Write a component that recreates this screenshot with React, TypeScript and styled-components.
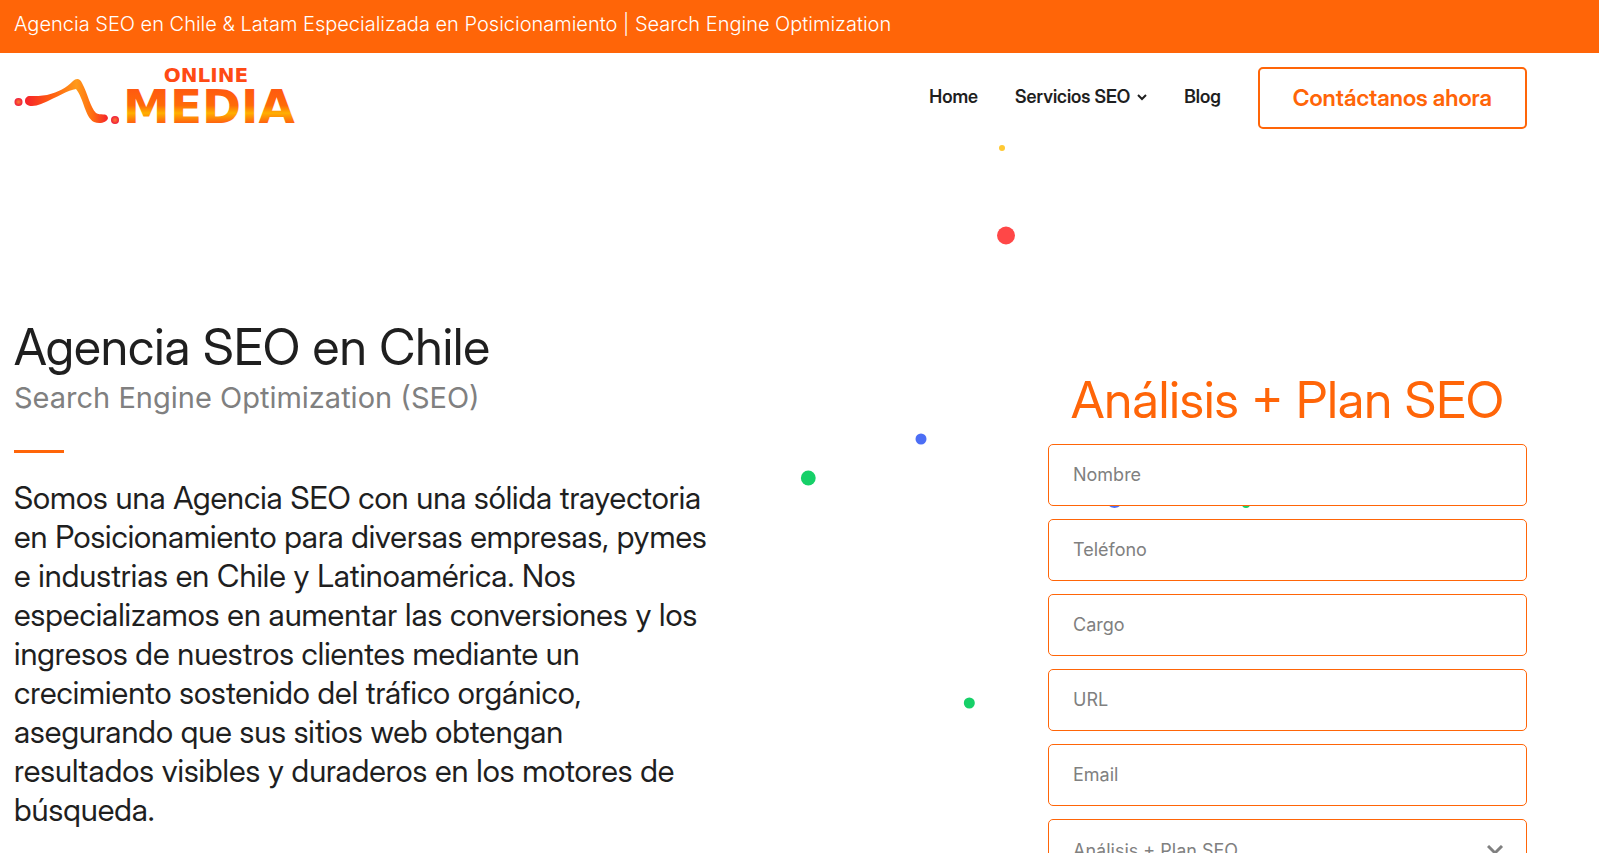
import React from "react";
import styled, { createGlobalStyle } from "styled-components";

const orange = "#ff6508";
const ink = "#1f1f1f";
const display = `"Inter Display", Inter, "Liberation Sans", sans-serif`;

const GlobalStyle = createGlobalStyle`
  *, *::before, *::after { box-sizing: border-box; }
  body {
    margin: 0;
    background: #fff;
    color: ${ink};
    font-family: Inter, "Liberation Sans", sans-serif;
  }
`;

const Page = styled.div`
  position: relative;
  overflow-x: clip;
`;

const TopBar = styled.div`
  background: ${orange};
  color: #fff;
  padding: 9px 14px 14px;
  font-size: 20px;
  font-weight: 300;
  line-height: 30px;
`;

const Header = styled.header`
  display: flex;
  justify-content: space-between;
  align-items: flex-start;
  padding: 14px 72px 0 14px;
`;

const LogoLink = styled.a`
  display: block;
  line-height: 0;
`;

const Nav = styled.nav`
  display: flex;
  align-items: center;
  gap: 37px;
`;

const NavLink = styled.a`
  display: flex;
  align-items: center;
  gap: 7px;
  padding-bottom: 2px;
  color: ${ink};
  font-family: ${display};
  font-size: 18px;
  font-weight: 600;
  line-height: 24px;
  text-decoration: none;
`;

const ContactButton = styled.button`
  height: 62px;
  padding: 0 33px;
  border: 2px solid ${orange};
  border-radius: 5px;
  background: #fff;
  color: ${orange};
  font: 600 23px/30px ${display};
  cursor: pointer;
`;

const Particles = styled.svg`
  position: absolute;
  top: 0;
  left: 0;
  overflow: visible;
  pointer-events: none;
`;

const Hero = styled.main`
  position: relative;
  display: flex;
  justify-content: space-between;
  align-items: flex-start;
  padding: 188px 72px 24px 14px;
`;

const Intro = styled.section`
  width: 48%;
  max-width: 694px;
`;

const Title = styled.h1`
  margin: 0;
  font-family: ${display};
  font-size: 50px;
  font-weight: 400;
  line-height: 60px;
`;

const Subtitle = styled.h2`
  margin: 0;
  color: #808080;
  font-size: 29px;
  font-weight: 400;
  line-height: 42px;
`;

const Rule = styled.hr`
  width: 50px;
  height: 3px;
  margin: 31px 0 25px;
  border: 0;
  background: ${orange};
`;

const Lead = styled.p`
  margin: 0;
  font-family: ${display};
  font-size: 31px;
  line-height: 39px;
`;

const Form = styled.form`
  display: flex;
  flex-direction: column;
  gap: 13px;
  width: 479px;
  padding-top: 52px;
`;

const FormTitle = styled.h2`
  margin: 0;
  color: ${orange};
  font-family: ${display};
  font-size: 51px;
  font-weight: 400;
  line-height: 62px;
  text-align: center;
  white-space: nowrap;
`;

const Field = styled.input`
  width: 100%;
  height: 62px;
  padding: 0 24px 2px;
  border: 1px solid ${orange};
  border-radius: 5px;
  background: #fff;
  color: ${ink};
  font: 400 18px/24px Inter, "Liberation Sans", sans-serif;
  &::placeholder { color: #808080; opacity: 1; }
`;

const SelectBox = styled.div`
  position: relative;
  svg {
    position: absolute;
    right: 23px;
    top: 26px;
    pointer-events: none;
  }
`;

const Select = styled(Field).attrs({ as: "select" })`
  appearance: none;
  padding: 2px 24px 0;
  color: #808080;
`;

const particles = [
  { x: 1002, y: 148, r: 3, color: "#ffc933" },
  { x: 1006, y: 235.5, r: 9, color: "#ff4747" },
  { x: 921, y: 439, r: 5.5, color: "#4c6ef5" },
  { x: 808.3, y: 478, r: 7.4, color: "#16d068" },
  { x: 969.3, y: 703, r: 5.5, color: "#16d068" },
  { x: 1114.5, y: 499, r: 9, color: "#4c6ef5" },
  { x: 1246, y: 504, r: 4, color: "#16d068" },
];

const fields = [
  { name: "nombre", label: "Nombre", type: "text" },
  { name: "telefono", label: "Teléfono", type: "tel" },
  { name: "cargo", label: "Cargo", type: "text" },
  { name: "url", label: "URL", type: "url" },
  { name: "email", label: "Email", type: "email" },
];

const Logo = () => (
  <svg width="284" height="60" viewBox="0 0 284 60" overflow="visible" role="img" aria-label="Online Media">
    <defs>
      <linearGradient id="media" x1="0" y1="0" x2="0" y2="1">
        <stop offset="0.2" stopColor="#ff5a10" />
        <stop offset="0.48" stopColor="#ff6a08" />
        <stop offset="0.62" stopColor="#ffb000" />
        <stop offset="0.82" stopColor="#ff5a10" />
      </linearGradient>
      <linearGradient id="swoosh" x1="0" y1="0" x2="1" y2="0">
        <stop offset="0" stopColor="#f5222d" />
        <stop offset="0.3" stopColor="#ff5a10" />
        <stop offset="0.62" stopColor="#ff9a1a" />
        <stop offset="0.82" stopColor="#ff6a10" />
        <stop offset="1" stopColor="#f5222d" />
      </linearGradient>
      <radialGradient id="dot">
        <stop offset="0" stopColor="#ff7a30" />
        <stop offset="1" stopColor="#ee1c3a" />
      </radialGradient>
    </defs>
    <circle cx="4.5" cy="35" r="4" fill="url(#dot)" />
    <path
      d="M16 29C22 29 27 29 33 28C45 25 52 21 59 14C62 11 66 11 68 16C74 27 76 40 82 46C86 49 93 45 94 51C93 56 85 57 80 55C71 50 70 32 62 22C54 23 44 30 27 37C20 40 11 40 11 34C11 31 13 29 16 29Z"
      fill="url(#swoosh)"
    />
    <circle cx="101" cy="53" r="4" fill="url(#dot)" />
    <text x="192" y="15" textAnchor="middle" fontFamily="DejaVu Sans" fontSize="20" fontWeight="700" fill="#ff4a14">ONLINE</text>
    <text x="195" y="56" textAnchor="middle" fontFamily="DejaVu Sans" fontWeight="700" fontSize="47" fill="url(#media)">MEDIA</text>
  </svg>
);

export default function App() {
  return (
    <Page>
      <GlobalStyle />
      <Particles width="100%" height="100%" aria-hidden="true">
        {particles.map((p) => (
          <circle key={`${p.x}-${p.y}`} cx={p.x} cy={p.y} r={p.r} fill={p.color} />
        ))}
      </Particles>
      <TopBar>Agencia SEO en Chile &amp; Latam Especializada en Posicionamiento | Search Engine Optimization</TopBar>
      <Header>
        <LogoLink href="#"><Logo /></LogoLink>
        <Nav>
          <NavLink href="#">Home</NavLink>
          <NavLink href="#servicios">
            Servicios SEO
            <svg width="10" height="8" viewBox="0 0 10 8" fill="none" stroke={ink} strokeWidth="2" aria-hidden="true">
              <path d="M1 2L5 6L9 2" />
            </svg>
          </NavLink>
          <NavLink href="#blog">Blog</NavLink>
          <ContactButton type="button">Contáctanos ahora</ContactButton>
        </Nav>
      </Header>
      <Hero>
        <Intro>
          <Title>Agencia SEO en Chile</Title>
          <Subtitle>Search Engine Optimization (SEO)</Subtitle>
          <Rule />
          <Lead>
            Somos una Agencia SEO con una sólida trayectoria en Posicionamiento para diversas empresas, pymes e
            industrias en Chile y Latinoamérica. Nos especializamos en aumentar las conversiones y los ingresos de
            nuestros clientes mediante un crecimiento sostenido del tráfico orgánico, asegurando que sus sitios web
            obtengan resultados visibles y duraderos en los motores de búsqueda.
          </Lead>
        </Intro>
        <Form>
          <FormTitle>Análisis + Plan SEO</FormTitle>
          {fields.map((f) => (
            <Field key={f.name} name={f.name} type={f.type} placeholder={f.label} aria-label={f.label} />
          ))}
          <SelectBox>
            <Select name="servicio" aria-label="Servicio">
              <option>Análisis + Plan SEO</option>
            </Select>
            <svg width="17" height="11" viewBox="0 0 17 11" fill="none" stroke="#808080" strokeWidth="3" aria-hidden="true">
              <path d="M1 1L8 8L15 1" />
            </svg>
          </SelectBox>
        </Form>
      </Hero>
    </Page>
  );
}
